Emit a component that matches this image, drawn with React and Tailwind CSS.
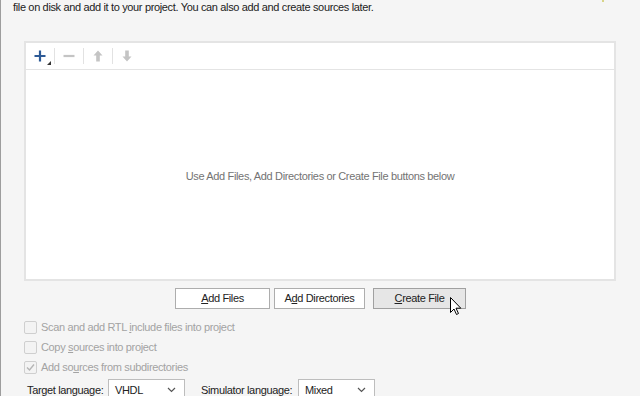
import React from 'react';

function Check({ checked }) {
    return (
        <span className="w-[13px] h-[13px] rounded-[2px] border border-[#cfcfcf] bg-[#f3f3f3] flex items-center justify-center shrink-0">
            {checked && (
                <svg width="9" height="9" viewBox="0 0 9 9">
                    <path d="M1 4.5 L3.5 7 L8 1.5" fill="none" stroke="#b5b5b5" strokeWidth="1.4" />
                </svg>
            )}
        </span>
    );
}

function Option({ checked, children }) {
    return (
        <div className="flex items-center gap-[4px] h-[20px] text-[#a3a3a3]">
            <Check checked={checked} />
            <span>{children}</span>
        </div>
    );
}

function Select({ value, width }) {
    return (
        <div className={`h-[22px] shrink-0 border border-[#bdbdbd] bg-white flex items-center justify-between pl-[6px] pr-[8px] ${width}`}>
            <span className="text-[#222]">{value}</span>
            <svg width="9" height="6" viewBox="0 0 9 6">
                <path d="M1 1 L4.5 4.5 L8 1" fill="none" stroke="#555" strokeWidth="1.2" />
            </svg>
        </div>
    );
}

function Sep() {
    return <span className="w-px h-[16px] bg-[#e2e2e2]" />;
}

export default function App() {
    return (
        <div className="w-[640px] h-[396px] bg-[#f5f5f5] border-l border-[#9d9d9d] overflow-hidden relative text-[11px] tracking-[-0.35px] text-[#222] font-['Liberation_Sans',Arial,sans-serif] whitespace-nowrap">
            <p className="pl-[12px] pt-0 leading-[14px]">file on disk and add it to your project. You can also add and create sources later.</p>
            <span className="absolute top-0 left-[601px] w-[2px] h-[2px] bg-[#d8d488]" />

            <div className="ml-[23px] mt-[27px] w-[592px] h-[240px] border-2 border-[#e4e4e4] bg-white flex flex-col">
                <div className="h-[27px] border-b border-[#e4e4e4] flex items-center pl-[6px] gap-[6px]">
                    <span className="relative w-[16px] h-[16px] flex items-center justify-center">
                        <svg width="12" height="12" viewBox="0 0 12 12">
                            <path d="M6 0.5 V11.5 M0.5 6 H11.5" stroke="#2d5a96" strokeWidth="2.2" />
                        </svg>
                        <svg className="absolute right-[-3px] bottom-[-1px]" width="4" height="4" viewBox="0 0 4 4">
                            <path d="M4 0 V4 H0 Z" fill="#333" />
                        </svg>
                    </span>
                    <Sep />
                    <span className="w-[16px] h-[16px] flex items-center justify-center">
                        <svg width="12" height="4" viewBox="0 0 12 4">
                            <path d="M0.5 2 H11.5" stroke="#c4c4c4" strokeWidth="2.2" />
                        </svg>
                    </span>
                    <Sep />
                    <span className="w-[16px] h-[16px] flex items-center justify-center">
                        <svg width="10" height="12" viewBox="0 0 10 12">
                            <path d="M5 0.5 L9.5 5.5 H6.8 V11.5 H3.2 V5.5 H0.5 Z" fill="#c4c4c4" />
                        </svg>
                    </span>
                    <Sep />
                    <span className="w-[16px] h-[16px] flex items-center justify-center">
                        <svg width="10" height="12" viewBox="0 0 10 12">
                            <path d="M5 11.5 L9.5 6.5 H6.8 V0.5 H3.2 V6.5 H0.5 Z" fill="#c4c4c4" />
                        </svg>
                    </span>
                </div>
                <div className="flex-1 flex items-center justify-center text-[#737373] pt-[3px]">
                    Use Add Files, Add Directories or Create File buttons below
                </div>
            </div>

            <div className="flex mt-[7px] h-[21px]">
                <button className="ml-[174px] w-[95px] h-[21px] border border-[#adadad] bg-white text-[#222]">
                    <span className="underline">A</span>dd Files
                </button>
                <button className="ml-[4px] w-[91px] h-[21px] border border-[#adadad] bg-white text-[#222]">
                    A<span className="underline">d</span>d Directories
                </button>
                <button className="ml-[8px] w-[93px] h-[21px] border border-[#a0a0a0] bg-[#e6e6e6] text-[#222]">
                    <span className="underline">C</span>reate File
                </button>
            </div>

            <div className="ml-[23px] mt-[8px] flex flex-col">
                <Option>Scan and add RTL <span className="underline">i</span>nclude files into project</Option>
                <Option>Copy <span className="underline">s</span>ources into project</Option>
                <Option checked>Add so<span className="underline">u</span>rces from subdirectories</Option>
            </div>

            <div className="flex items-center ml-[26px] mt-[2px]">
                <span className="w-[81px] shrink-0">Target language:</span>
                <Select value="VHDL" width="w-[77px]" />
                <span className="ml-[16px] w-[97px] shrink-0">Simulator language:</span>
                <Select value="Mixed" width="w-[77px]" />
            </div>

            <svg className="absolute left-[449px] top-[297px]" width="12" height="19" viewBox="0 0 12 19">
                <path d="M0.5 0.5 V15.5 L4 12 L6.5 17.5 L8.5 16.5 L6 11.2 H10.8 Z" fill="#fff" stroke="#000" strokeWidth="1" strokeLinejoin="round" />
            </svg>
        </div>
    );
}
